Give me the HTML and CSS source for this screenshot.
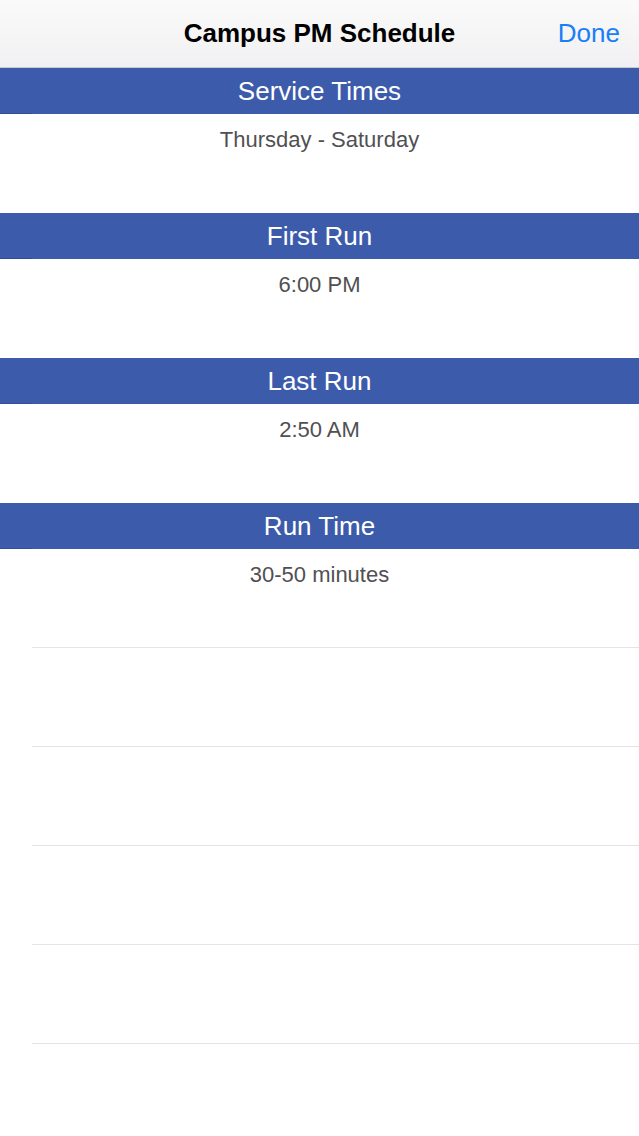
FILE: index.html
```html
<!DOCTYPE html>
<html lang="en">
<head>
    <meta charset="UTF-8">
    <meta name="viewport" content="width=device-width, initial-scale=1.0">
    <title>Campus PM Schedule</title>
    <link rel="stylesheet" href="styles.css">
</head>
<body>
    <header class="navbar">
        <span class="nav-side"></span>
        <h1>Campus PM Schedule</h1>
        <a class="nav-side done" href="#">Done</a>
    </header>

    <div class="table">
        <div class="section">Service Times</div>
        <div class="row">Thursday - Saturday</div>

        <div class="section">First Run</div>
        <div class="row">6:00 PM</div>

        <div class="section">Last Run</div>
        <div class="row">2:50 AM</div>

        <div class="section">Run Time</div>
        <div class="row line">30-50 minutes</div>

        <!-- empty cells -->
        <div class="row line"></div>
        <div class="row line"></div>
        <div class="row line"></div>
        <div class="row line"></div>
        <div class="row"></div>
    </div>
</body>
</html>
```

FILE: styles.css
```css
body {
    font-family: "Liberation Sans", Arial, sans-serif;
    margin: 0;
    padding: 0;
    background: #fff;
}
.navbar {
    display: flex;
    align-items: center;
    height: 67px;
    background: linear-gradient(#fafafa, #f1f1f3);
    border-bottom: 1px solid #c9cad0;
}
.navbar h1 {
    flex: 1;
    margin: 0;
    text-align: center;
    font-size: 26px;
    font-weight: bold;
    color: #000;
    padding-bottom: 1px;
}
.nav-side {
    width: 110px;
}
.done {
    color: #1a7ef6;
    text-decoration: none;
    font-size: 26px;
    text-align: right;
    padding-right: 19px;
    box-sizing: border-box;
    padding-bottom: 1px;
}
.section {
    height: 46px;
    line-height: 46px;
    text-align: center;
    color: #fff;
    font-size: 26px;
    background: linear-gradient(#324d99, #324d99) 0 100% / 32px 1px no-repeat, #3d5bab;
}
.row {
    height: 99px;
    box-sizing: border-box;
    padding-top: 12px;
    text-align: center;
    font-size: 22px;
    line-height: 27px;
    color: #505052;
}
.line {
    background: linear-gradient(#e4e4e8, #e4e4e8) 32px 100% / calc(100% - 32px) 1px no-repeat;
}
```
